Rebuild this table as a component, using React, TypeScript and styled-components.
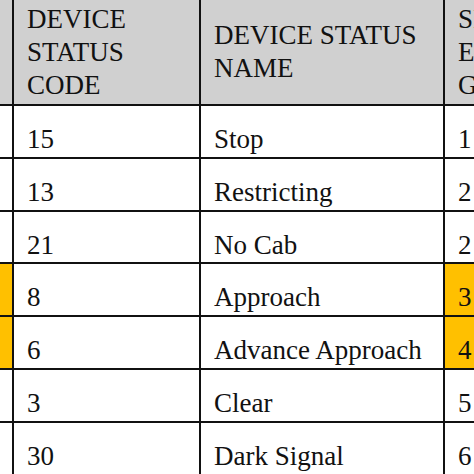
import React from 'react';
import styled, { createGlobalStyle } from 'styled-components';

const GlobalStyle = createGlobalStyle`
  html, body {
    margin: 0;
    padding: 0;
    background: #ffffff;
    overflow: hidden;
  }
`;

const TableWrap = styled.div`
  width: 474px;
  height: 474px;
  overflow: hidden;
  font-family: 'Liberation Serif', 'Times New Roman', serif;
  font-size: 27px;
  line-height: 33px;
  color: #111;
`;

const Row = styled.div<{ header?: boolean }>`
  display: grid;
  grid-template-columns: 12px 187px 244px 220px;
  height: ${({ header }) => (header ? '106px' : '52.8px')};
  box-sizing: border-box;
  border-bottom: 2px solid #111;
  width: 663px;
`;

const Cell = styled.div<{ header?: boolean; fill?: string; first?: boolean }>`
  box-sizing: border-box;
  border-left: ${({ first }) => (first ? 'none' : '2px solid #111')};
  background: ${({ header, fill }) => fill || (header ? '#d0d0d0' : '#ffffff')};
  padding: ${({ header }) => (header ? '0 0 0 13px' : '17px 0 0 13px')};
  display: flex;
  flex-direction: column;
  justify-content: ${({ header }) => (header ? 'center' : 'flex-start')};
  white-space: nowrap;
  overflow: hidden;
`;

const YELLOW = '#ffc000';

const rows = [
  { code: '15', name: 'Stop', seq: '1' },
  { code: '13', name: 'Restricting', seq: '2' },
  { code: '21', name: 'No Cab', seq: '2' },
  { code: '8', name: 'Approach', seq: '3', mark: true },
  { code: '6', name: 'Advance Approach', seq: '4', mark: true },
  { code: '3', name: 'Clear', seq: '5' },
  { code: '30', name: 'Dark Signal', seq: '6' },
];

export default function App() {
  return (
    <>
      <GlobalStyle />
      <TableWrap>
        <Row header>
          <Cell header first />
          <Cell header>
            <span>DEVICE</span>
            <span>STATUS</span>
            <span>CODE</span>
          </Cell>
          <Cell header>
            <span>DEVICE STATUS</span>
            <span>NAME</span>
          </Cell>
          <Cell header>
            <span>SIGNAL</span>
            <span>EVENT</span>
            <span>GROUP</span>
          </Cell>
        </Row>
        {rows.map((r) => (
          <Row key={r.code + r.name}>
            <Cell first fill={r.mark ? YELLOW : undefined} />
            <Cell>{r.code}</Cell>
            <Cell>{r.name}</Cell>
            <Cell fill={r.mark ? YELLOW : undefined}>{r.seq}</Cell>
          </Row>
        ))}
      </TableWrap>
    </>
  );
}
